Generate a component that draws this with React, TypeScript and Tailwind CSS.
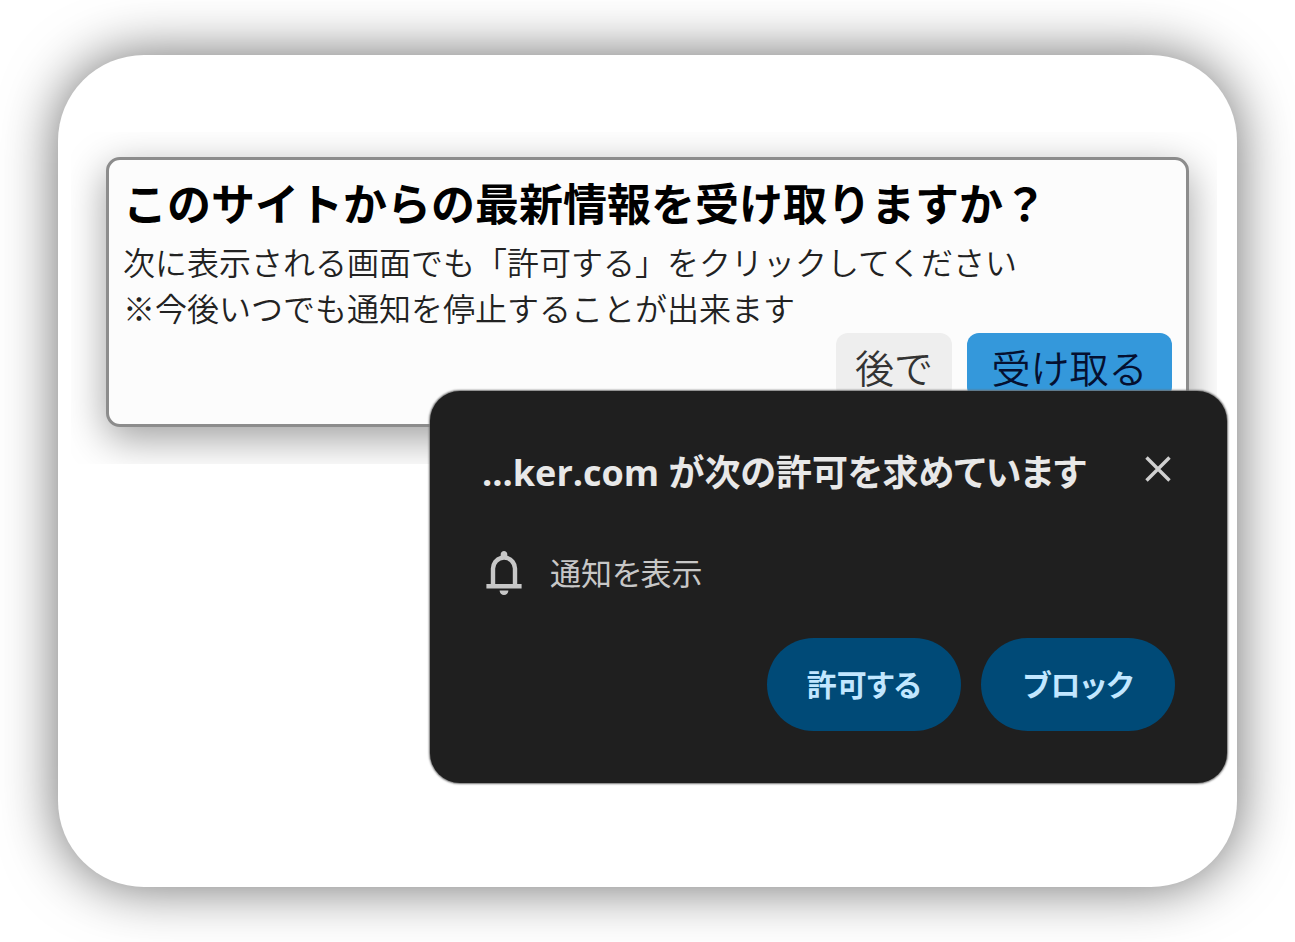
import React from "react";

function BellIcon() {
  return (
    <svg viewBox="4 2 16 20" className="h-11 w-9 shrink-0" fill="currentColor" aria-hidden="true">
      <path d="M4 19v-2h2v-7q0-2.075 1.25-3.688T10.5 4.2v-.7q0-.625.438-1.063T12 2q.625 0 1.063.438T13.5 3.5v.7q2 .5 3.25 2.113T18 10v7h2v2H4Zm8 3q-.825 0-1.413-.588T10 20h4q0 .825-.588 1.413T12 22Zm-4-5h8v-7q0-1.65-1.175-2.825T12 6q-1.65 0-2.825 1.175T8 10v7Z" />
    </svg>
  );
}

function CloseIcon() {
  return (
    <svg viewBox="0 0 26 26" className="h-[26px] w-[26px]" fill="none" stroke="currentColor" strokeWidth="3.4" aria-hidden="true">
      <path d="M1.5 1.5 24.5 24.5M24.5 1.5 1.5 24.5" />
    </svg>
  );
}

function SubscribeCard() {
  return (
    <div className="overflow-hidden pt-[25px] pr-7 pb-[37px] pl-[35px]">
      <section className="rounded-[14px] border-[3px] border-[#8c8c8c] bg-[#fcfcfc] pt-[13px] pr-[14px] pb-[25px] pl-[14px] shadow-[0_12px_40px_rgba(0,0,0,0.38)]">
        <h1 className="text-[44px] leading-[58px] font-bold whitespace-nowrap text-black">
          このサイトからの最新情報を受け取りますか？
        </h1>
        <p className="mt-[7px] text-[32px] leading-[46px] font-[350] whitespace-nowrap text-[#222222]">
          次に表示される画面でも「許可する」をクリックしてください
          <br />
          ※今後いつでも通知を停止することが出来ます
        </p>
        <div className="mt-[3px] flex justify-end gap-[15px] text-[39px] leading-[66px] font-[350]">
          <button type="button" className="w-[116px] rounded-xl bg-[#eeeeee] text-[#333333]">
            後で
          </button>
          <button type="button" className="w-[205px] rounded-xl bg-[#3498db] text-[#051030]">
            受け取る
          </button>
        </div>
      </section>
    </div>
  );
}

function PermissionDialog() {
  return (
    <section
      role="dialog"
      aria-labelledby="permission-title"
      className="relative -mt-[73px] mr-[-3px] ml-auto w-[797px] max-w-full rounded-[30px] bg-[#1f1f1f] px-[52px] pt-[50px] pb-[52px] font-['Open_Sans','Noto_Sans_CJK_JP',sans-serif] shadow-[0_0_2px_1px_#707070] [font-feature-settings:'palt']"
    >
      <div className="flex h-16 items-center justify-between">
        <h2 id="permission-title" className="text-[36px] leading-[64px] font-bold whitespace-nowrap text-[#e8e8e8]">
          ...ker.com が次の許可を求めています
        </h2>
        <button type="button" aria-label="閉じる" className="mb-2 flex h-[34px] w-[34px] items-center justify-center text-[#d0d0d0]">
          <CloseIcon />
        </button>
      </div>
      <div className="mt-9 flex h-16 items-center gap-7 pl-1 text-[#c7c7c7]">
        <BellIcon />
        <span className="text-[31px] leading-[64px]">通知を表示</span>
      </div>
      <div className="mt-[33px] flex justify-end gap-5 text-[30px] leading-[93px] font-semibold text-[#c2e7ff]">
        <button type="button" className="w-[194px] rounded-full bg-[#004a77]">
          許可する
        </button>
        <button type="button" className="w-[194px] rounded-full bg-[#004a77]">
          ブロック
        </button>
      </div>
    </section>
  );
}

export default function App() {
  return (
    <div lang="ja" className="min-h-screen bg-white px-[58px] py-[55px] font-['Noto_Sans_CJK_JP',sans-serif]">
      <main className="rounded-[86px] bg-white pt-[77px] pr-[13px] pb-[104px] pl-[13px] shadow-[0_0_56px_rgba(0,0,0,0.58)]">
        <div className="pr-[7px]">
          <SubscribeCard />
        </div>
        <PermissionDialog />
      </main>
    </div>
  );
}
